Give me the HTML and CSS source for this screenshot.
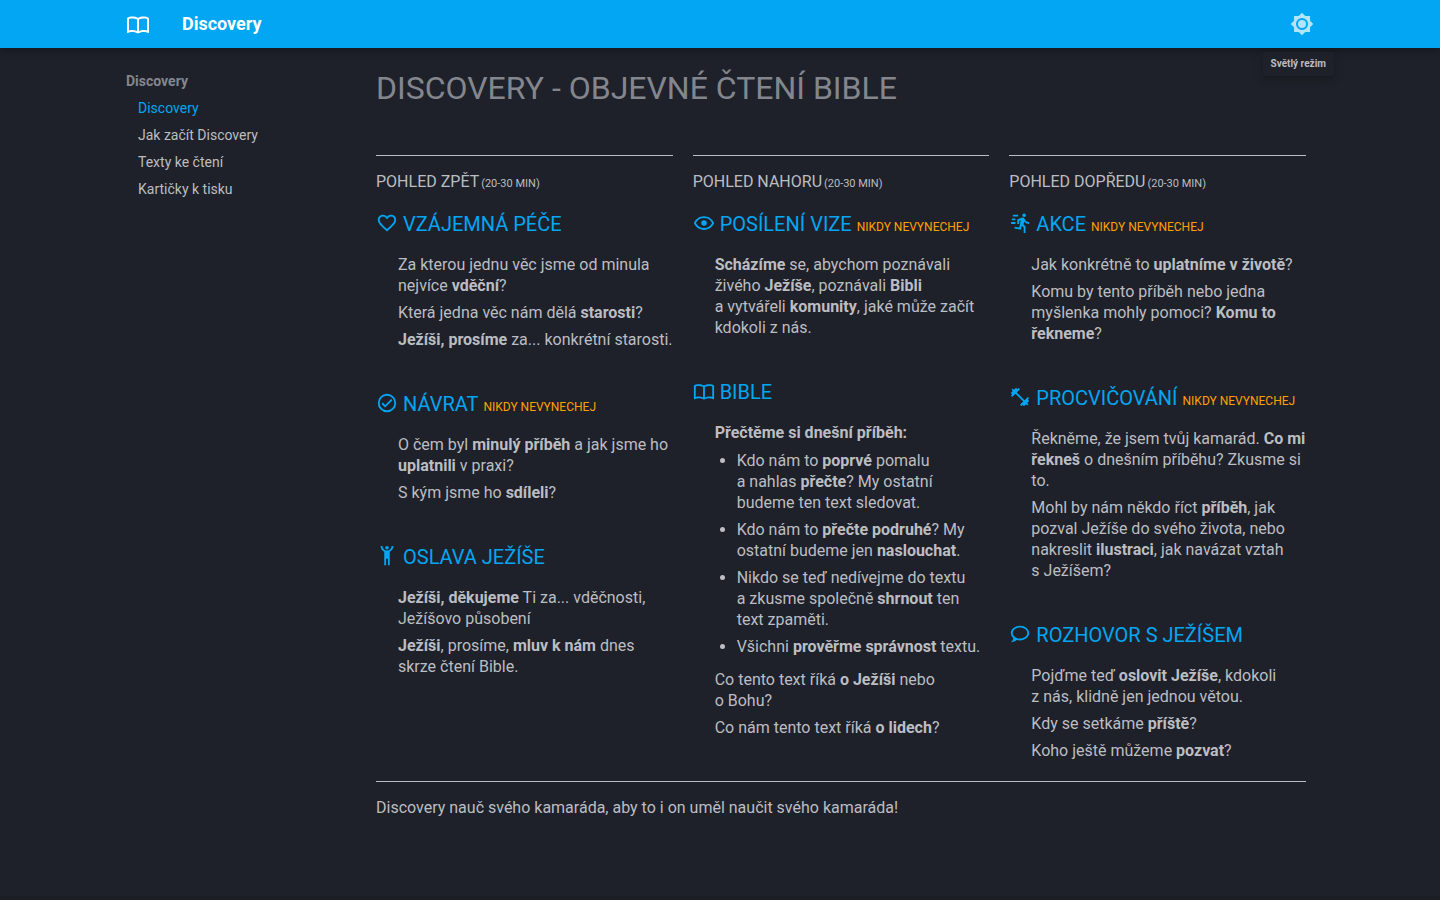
FILE: index.html
```html
<!DOCTYPE html>
<html lang="cs">
<head>
<meta charset="utf-8">
<meta name="viewport" content="width=device-width, initial-scale=1">
<title>Discovery</title>
<link rel="stylesheet" href="styles.css">
</head>
<body>
<svg class="sprite" aria-hidden="true">
  <symbol id="book" viewBox="0 0 24 24"><path d="M12 21.5c-1.35-.85-3.8-1.5-5.5-1.5-1.65 0-3.35.3-4.75 1.05-.1.05-.15.05-.25.05-.25 0-.5-.25-.5-.5V6c.6-.45 1.25-.75 2-1 1.11-.35 2.33-.5 3.5-.5 1.95 0 4.05.4 5.5 1.5 1.45-1.1 3.55-1.5 5.5-1.5 1.17 0 2.39.15 3.5.5.75.25 1.4.55 2 1v14.6c0 .25-.25.5-.5.5-.1 0-.15 0-.25-.05-1.4-.75-3.1-1.05-4.75-1.05-1.7 0-4.15.65-5.5 1.5M11 7.5c-1.36-.6-3.16-1-4.5-1-1.2 0-2.4.15-3.5.5v11.5c1.1-.35 2.3-.5 3.5-.5 1.34 0 3.14.4 4.5 1V7.5m2 11.500c1.360-.6 3.160-1 4.500-1 1.200 0 2.400.15 3.500.5V7c-1.100-.35-2.300-.5-3.500-.5-1.340 0-3.140.4-4.500 1V19z"/></symbol>
  <symbol id="sun" viewBox="0 0 24 24"><path d="M12 8a4 4 0 0 0-4 4 4 4 0 0 0 4 4 4 4 0 0 0 4-4 4 4 0 0 0-4-4m0 10a6 6 0 0 1-6-6 6 6 0 0 1 6-6 6 6 0 0 1 6 6 6 6 0 0 1-6 6m8-9.310V4h-4.690L12 .69 8.690 4H4v4.690L.69 12 4 15.310V20h4.690L12 23.310 15.310 20H20v-4.690L23.310 12z"/></symbol>
  <symbol id="heart" viewBox="0 0 24 24"><path d="m12.100 18.550-.1.1-.11-.1C7.140 14.240 4 11.390 4 8.500 4 6.500 5.500 5 7.500 5c1.540 0 3.040 1 3.570 2.360h1.860C13.460 6 14.960 5 16.500 5c2 0 3.500 1.500 3.500 3.500 0 2.890-3.140 5.740-7.900 10.050M16.500 3c-1.740 0-3.410.81-4.500 2.080C10.910 3.810 9.240 3 7.500 3 4.420 3 2 5.410 2 8.500c0 3.770 3.400 6.860 8.550 11.530L12 21.350l1.450-1.320C18.600 15.360 22 12.270 22 8.500 22 5.410 19.580 3 16.500 3z"/></symbol>
  <symbol id="check" viewBox="0 0 24 24"><path d="M12 2a10 10 0 1 0 0 20 10 10 0 0 0 0-20m0 18a8 8 0 1 1 0-16 8 8 0 0 1 0 16m4.590-12.420L10 14.170l-2.590-2.580L6 13l4 4 8-8z"/></symbol>
  <symbol id="hands" viewBox="0 0 24 24"><path d="M5 1c0 2.700 1.560 5.160 4 6.320V22h2v-7h2v7h2V7.310C17.440 6.160 19 3.700 19 1h-2a5 5 0 0 1-5 5 5 5 0 0 1-5-5M12 1a2 2 0 1 0 0 4 2 2 0 0 0 0-4z"/></symbol>
  <symbol id="eye" viewBox="0 0 24 24"><path d="M12 9a3 3 0 1 1 0 6 3 3 0 0 1 0-6m0-4.500c5 0 9.270 3.110 11 7.500-1.730 4.390-6 7.500-11 7.500S2.730 16.390 1 12c1.730-4.390 6-7.500 11-7.500M3.180 12a9.821 9.821 0 0 0 17.640 0 9.821 9.821 0 0 0-17.640 0z"/></symbol>
  <symbol id="run" viewBox="0 0 24 24"><path d="M16.500 5.500a2 2 0 1 0 0-4 2 2 0 0 0 0 4m-3.600 13.900 1-4.400 2.100 2v6h2v-7.500l-2.100-2 .6-3A7.298 7.298 0 0 0 22 13v-2c-1.760.03-3.400-.89-4.300-2.400l-1-1.600c-.36-.6-1-1-1.700-1-.3 0-.5.1-.8.1L9 8.300V13h2V9.600l1.800-.7-1.600 8.100-4.900-1-.4 2 7 1.400M4 9a1 1 0 0 1 0-2h3v2H4m1-4a1 1 0 0 1 0-2h5v2H5m-2 8a1 1 0 0 1 0-2h4v2H3z"/></symbol>
  <symbol id="dumbbell" viewBox="0 0 24 24"><path d="M20.570 14.860 22 13.430 20.570 12 17 15.570 8.430 7 12 3.430 10.570 2 9.140 3.430 7.710 2 5.570 4.140 4.140 2.710 2.710 4.140l1.430 1.430L2 7.710l1.430 1.430L2 10.570 3.430 12 7 8.430 15.570 17 12 20.570 13.430 22l1.430-1.430L16.290 22l2.140-2.140 1.430 1.430 1.430-1.430-1.430-1.430L22 16.290z"/></symbol>
  <symbol id="chat" viewBox="0 0 24 24"><path d="M12 3C6.500 3 2 6.580 2 11a7.218 7.218 0 0 0 2.750 5.500c0 .6-.42 2.170-2.750 4.500 2.370-.11 4.640-1 6.470-2.500 1.140.33 2.340.5 3.530.5 5.500 0 10-3.580 10-8s-4.500-8-10-8m0 14c-4.420 0-8-2.690-8-6s3.580-6 8-6 8 2.690 8 6-3.580 6-8 6z"/></symbol>
</svg>

<header class="header">
  <div class="header-inner">
    <a class="logo" href="#" aria-label="Discovery"><svg class="icon-lg" aria-hidden="true"><use href="#book"/></svg></a>
    <span class="site-title">Discovery</span>
    <div class="palette">
      <button class="palette-button" type="button" aria-describedby="palette-tip" aria-label="Světlý režim"><svg class="icon-lg" aria-hidden="true"><use href="#sun"/></svg></button>
      <span class="tooltip" id="palette-tip" role="tooltip">Světlý režim</span>
    </div>
  </div>
</header>

<div class="page">
  <nav class="sidebar" aria-label="Discovery">
    <span class="nav-title">Discovery</span>
    <ul class="nav-list">
      <li><a class="nav-link active" href="#">Discovery</a></li>
      <li><a class="nav-link" href="#">Jak začít Discovery</a></li>
      <li><a class="nav-link" href="#">Texty ke čtení</a></li>
      <li><a class="nav-link" href="#">Kartičky k tisku</a></li>
    </ul>
  </nav>

  <main class="content">
    <h1>DISCOVERY - OBJEVNÉ ČTENÍ BIBLE</h1>

    <div class="columns">
      <section class="column">
        <h2>POHLED ZPĚT <small>(20-30 MIN)</small></h2>
        <article>
          <h3><svg class="icon" aria-hidden="true"><use href="#heart"/></svg> VZÁJEMNÁ PÉČE</h3>
          <div class="steps">
            <p>Za kterou jednu věc jsme od minula nejvíce <b>vděční</b>?</p>
            <p>Která jedna věc nám dělá <b>starosti</b>?</p>
            <p><b>Ježíši, prosíme</b> za... konkrétní starosti.</p>
          </div>
        </article>
        <article>
          <h3><svg class="icon" aria-hidden="true"><use href="#check"/></svg> NÁVRAT <small>NIKDY NEVYNECHEJ</small></h3>
          <div class="steps">
            <p>O čem byl <b>minulý příběh</b> a jak jsme ho <b>uplatnili</b> v praxi?</p>
            <p>S kým jsme ho <b>sdíleli</b>?</p>
          </div>
        </article>
        <article>
          <h3><svg class="icon" aria-hidden="true"><use href="#hands"/></svg> OSLAVA JEŽÍŠE</h3>
          <div class="steps">
            <p><b>Ježíši, děkujeme</b> Ti za... vděčnosti, Ježíšovo působení</p>
            <p><b>Ježíši</b>, prosíme, <b>mluv k nám</b> dnes skrze čtení Bible.</p>
          </div>
        </article>
      </section>

      <section class="column">
        <h2>POHLED NAHORU <small>(20-30 MIN)</small></h2>
        <article>
          <h3><svg class="icon" aria-hidden="true"><use href="#eye"/></svg> POSÍLENÍ VIZE <small>NIKDY NEVYNECHEJ</small></h3>
          <div class="steps">
            <p><b>Scházíme</b> se, abychom poznávali živého <b>Ježíše</b>, poznávali <b>Bibli</b> a&nbsp;vytvářeli <b>komunity</b>, jaké může začít kdokoli z&nbsp;nás.</p>
          </div>
        </article>
        <article>
          <h3><svg class="icon" aria-hidden="true"><use href="#book"/></svg> BIBLE</h3>
          <div class="steps">
            <p><b>Přečtěme si dnešní příběh:</b></p>
            <ul>
              <li>Kdo nám to <b>poprvé</b> pomalu a&nbsp;nahlas <b>přečte</b>? My ostatní budeme ten text sledovat.</li>
              <li>Kdo nám to <b>přečte podruhé</b>? My ostatní budeme jen <b>naslouchat</b>.</li>
              <li>Nikdo se teď nedívejme do textu a&nbsp;zkusme společně <b>shrnout</b> ten text zpaměti.</li>
              <li>Všichni <b>prověřme správnost</b> textu.</li>
            </ul>
            <p>Co tento text říká <b>o&nbsp;Ježíši</b> nebo o&nbsp;Bohu?</p>
            <p>Co nám tento text říká <b>o&nbsp;lidech</b>?</p>
          </div>
        </article>
      </section>

      <section class="column">
        <h2>POHLED DOPŘEDU <small>(20-30 MIN)</small></h2>
        <article>
          <h3><svg class="icon" aria-hidden="true"><use href="#run"/></svg> AKCE <small>NIKDY NEVYNECHEJ</small></h3>
          <div class="steps">
            <p>Jak konkrétně to <b>uplatníme v&nbsp;životě</b>?</p>
            <p>Komu by tento příběh nebo jedna myšlenka mohly pomoci? <b>Komu to řekneme</b>?</p>
          </div>
        </article>
        <article>
          <h3><svg class="icon" aria-hidden="true"><use href="#dumbbell"/></svg> PROCVIČOVÁNÍ <small>NIKDY NEVYNECHEJ</small></h3>
          <div class="steps">
            <p>Řekněme, že jsem tvůj kamarád. <b>Co mi řekneš</b> o&nbsp;dnešním příběhu? Zkusme si to.</p>
            <p>Mohl by nám někdo říct <b>příběh</b>, jak pozval Ježíše do svého života, nebo nakreslit <b>ilustraci</b>, jak navázat vztah s&nbsp;Ježíšem?</p>
          </div>
        </article>
        <article>
          <h3><svg class="icon" aria-hidden="true"><use href="#chat"/></svg> ROZHOVOR S&nbsp;JEŽÍŠEM</h3>
          <div class="steps">
            <p>Pojďme teď <b>oslovit Ježíše</b>, kdokoli z&nbsp;nás, klidně jen jednou větou.</p>
            <p>Kdy se setkáme <b>příště</b>?</p>
            <p>Koho ještě můžeme <b>pozvat</b>?</p>
          </div>
        </article>
      </section>
    </div>

    <p class="closing">Discovery nauč svého kamaráda, aby to i on uměl naučit svého kamaráda!</p>
  </main>
</div>
<footer class="footer"></footer>
</body>
</html>
```

FILE: styles.css
```css
* {
  box-sizing: border-box;
}

body {
  margin: 0;
  min-height: 100vh;
  display: flex;
  flex-direction: column;
  background: #1e2129;
  color: #bcbdc2;
  font: 16px/21px Roboto, sans-serif;
  -webkit-font-smoothing: antialiased;
}

.sprite {
  position: absolute;
  width: 0;
  height: 0;
}

svg {
  fill: currentColor;
}

b {
  font-weight: 700;
}

.header {
  background: #02a6f2;
  color: #fff;
  box-shadow: 0 0 4px rgba(0, 0, 0, 0.1), 0 4px 8px rgba(0, 0, 0, 0.2);
}

.header-inner,
.page {
  width: 100%;
  max-width: 1220px;
  margin: 0 auto;
  padding: 0 16px;
}

.header-inner {
  display: flex;
  align-items: center;
  height: 48px;
}

.icon-lg {
  display: block;
  width: 24px;
  height: 24px;
}

.logo {
  color: inherit;
}

.site-title {
  margin-left: 32px;
  font-size: 18px;
  font-weight: 700;
  line-height: 20px;
}

.palette {
  position: relative;
  margin-left: auto;
}

.palette-button {
  display: block;
  padding: 0;
  border: 0;
  background: none;
  color: inherit;
  opacity: 0.7;
  cursor: pointer;
}

.tooltip {
  position: absolute;
  top: 40px;
  right: -20px;
  padding: 0 8px;
  border-radius: 2px;
  background: #1e2129;
  color: #bcbdc2;
  box-shadow: 0 4px 10px rgba(0, 0, 0, 0.2), 0 0 1px rgba(0, 0, 0, 0.1);
  font-size: 10px;
  font-weight: 700;
  line-height: 24px;
  white-space: nowrap;
}

.page {
  display: flex;
  flex: 1;
}

.sidebar {
  flex: 0 0 250px;
  padding-top: 24px;
  font-size: 14px;
  line-height: 18px;
}

.nav-title {
  color: #84868e;
  font-weight: 700;
}

.nav-list {
  margin: 0;
  padding: 0 0 0 12px;
  list-style: none;
}

.nav-link {
  display: block;
  margin-top: 9px;
  color: inherit;
  text-decoration: none;
}

.nav-link.active {
  color: #02a6f2;
}

.content {
  flex: 1;
  min-width: 0;
  padding: 20px 8px 0 0;
}

h1 {
  margin: 0 0 46px;
  color: #84868e;
  font-size: 32px;
  font-weight: 400;
  line-height: 41px;
}

.columns {
  display: grid;
  grid-template-columns: repeat(3, 1fr);
  column-gap: 20px;
}

.column {
  border-top: 1px solid #bcbdc2;
  padding-top: 15px;
}

h2,
h3 {
  display: flex;
  align-items: baseline;
  font-weight: 400;
}

h2 {
  gap: 2px;
  margin: 0 0 19px;
  font-size: 16px;
  line-height: 21px;
}

h2 small {
  font-size: 11px;
  line-height: 16px;
}

h3 {
  gap: 5px;
  margin: 0 0 16px;
  color: #02a6f2;
  font-size: 20px;
  line-height: 27px;
}

h3 small {
  color: #ffa000;
  font-size: 12px;
  line-height: 16px;
}

.icon {
  align-self: flex-start;
  flex: none;
  width: 22px;
  height: 24px;
}

article {
  margin-bottom: 41px;
}

article:last-child {
  margin-bottom: 20px;
}

.steps {
  padding-left: 22px;
}

.steps p {
  margin: 0 0 6px;
}

.steps ul {
  margin: 7px 0 12px;
  padding-left: 22px;
}

.steps li {
  margin-bottom: 6px;
}

.steps > :last-child,
.steps li:last-child {
  margin-bottom: 0;
}

.closing {
  margin: 0;
  padding: 15px 0 24px;
  border-top: 1px solid #bcbdc2;
}

.footer {
  height: 4px;
  background: #1c1e26;
}
```
